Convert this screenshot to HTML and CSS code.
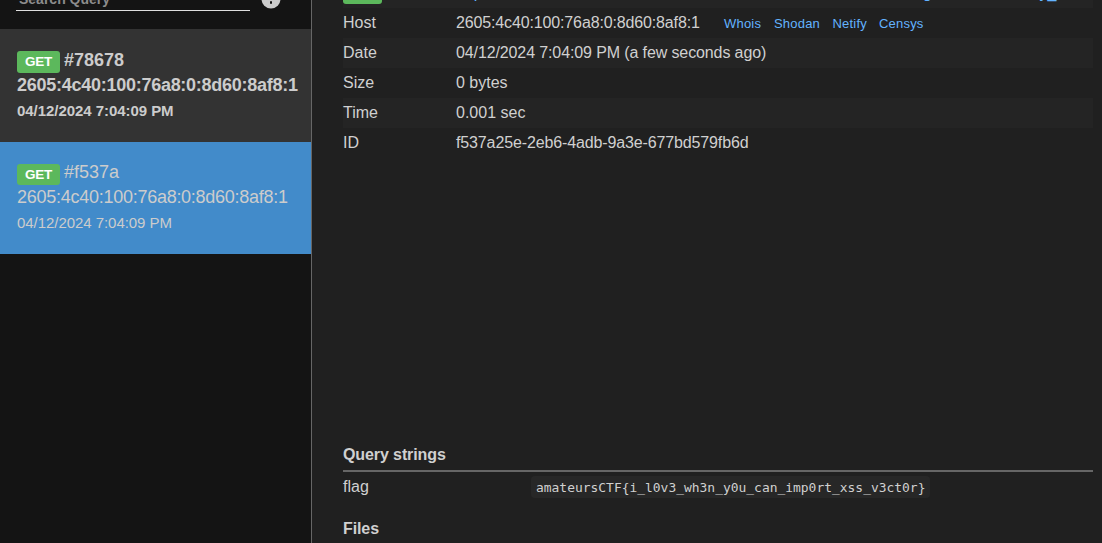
FILE: index.html
```html
<!DOCTYPE html>
<html lang="en">
<head>
<meta charset="utf-8">
<title>Requests</title>
<link rel="stylesheet" href="styles.css">
</head>
<body>
<div class="app">
  <aside class="sidebar">
    <div class="search">
      <div class="search-field"><span>Search Query</span></div>
      <svg class="help" viewBox="0 0 20 20" width="20" height="20"><circle cx="10" cy="10" r="9.5" fill="#ccc"/><path d="M6.8 6.5a3.2 3 0 1 1 4.6 2.7c-1 .5-1.4.9-1.4 1.8" fill="none" stroke="#141414" stroke-width="2"/><path d="M9 12.2h2v2.5H9z" fill="#141414"/></svg>
    </div>
    <div class="request unread">
      <div class="title"><span class="label">GET</span><span class="number">#78678</span></div>
      <div class="ip">2605:4c40:100:76a8:0:8d60:8af8:1</div>
      <div class="when">04/12/2024 7:04:09 PM</div>
    </div>
    <div class="request active">
      <div class="title"><span class="label">GET</span><span class="number">#f537a</span></div>
      <div class="ip">2605:4c40:100:76a8:0:8d60:8af8:1</div>
      <div class="when">04/12/2024 7:04:09 PM</div>
    </div>
  </aside>
  <main class="content">
    <div class="details">
      <div class="row first"><span class="method">GET</span><div class="url"><span>https</span><span class="url-mid">g</span><span class="url-end">y_</span></div></div>
      <div class="row"><span>Host</span><div class="host"><span class="address">2605:4c40:100:76a8:0:8d60:8af8:1</span><a class="whois">Whois</a><a class="shodan">Shodan</a><a class="netify">Netify</a><a class="censys">Censys</a></div></div>
      <div class="row striped"><span>Date</span><span class="date">04/12/2024 7:04:09 PM (a few seconds ago)</span></div>
      <div class="row"><span>Size</span><span>0 bytes</span></div>
      <div class="row striped"><span>Time</span><span>0.001 sec</span></div>
      <div class="row"><span>ID</span><span class="uuid">f537a25e-2eb6-4adb-9a3e-677bd579fb6d</span></div>
    </div>
    <section class="query">
      <h2>Query strings</h2>
      <div class="param"><span>flag</span><code>amateursCTF{i_l0v3_wh3n_y0u_can_imp0rt_xss_v3ct0r}</code></div>
    </section>
    <h2 class="files">Files</h2>
  </main>
</div>
</body>
</html>
```
FILE: styles.css
```css
* { box-sizing: border-box; }
body { margin: 0; background: #202020; color: #d0d0d0; font: 16px/20px "Liberation Sans", Arial, sans-serif; overflow: hidden; }
.app { display: flex; height: 543px; overflow: hidden; white-space: nowrap; }
.sidebar { width: 312px; flex: none; background: #141414; border-right: 1px solid #666; }
.search { height: 29px; padding-left: 16px; display: flex; align-items: flex-start; gap: 11px; }
.search-field { width: 234px; height: 11px; display: flex; align-items: flex-end; border-bottom: 1px solid #e0e0e0; color: #8c8c8c; font-size: 14px; font-weight: bold; line-height: 16px; padding: 0 0 3px 3px; }
.help { margin-top: -11px; }
.request { height: 112px; padding: 18px 0 0 17px; color: #ccc; font-size: 18px; line-height: 25px; }
.unread { height: 113px; background: #333; font-weight: bold; }
.active { background: #428bca; }
.title { display: flex; gap: 4px; height: 26px; }
.unread .number { line-height: 27px; }
.active .title { height: 25px; }
.label { width: 43px; height: 22px; margin-top: 4px; border-radius: 3px; background: #5cb85c; color: #fff; font: bold 13.5px/22px "Liberation Sans", Arial, sans-serif; letter-spacing: -0.2px; text-align: center; }
.active .label { height: 21px; line-height: 21px; }
.ip { letter-spacing: -0.265px; }
.when { font-size: 15px; line-height: 25px; letter-spacing: -0.05px; }
.content { flex: 1; min-width: 0; padding: 0 9px 0 31px; }
.row { display: grid; grid-template-columns: 113px 1fr; height: 30px; line-height: 30px; }
.striped, .first { background: #242424; }
.first { height: 8px; }
.method { width: 39px; height: 24px; margin-top: -20px; border-radius: 3px; background: #5cb85c; color: #fff; font-size: 12px; line-height: 24px; text-align: center; }
.url { display: flex; height: 20px; margin-top: -17px; line-height: 20px; color: #63b3ff; }
.url-mid { margin-left: 432px; }
.url-end { margin-left: 108px; }
.host { display: flex; }
.host a { font-size: 13px; color: #63b3ff; line-height: 31px; letter-spacing: 0.2px; }
.address { width: 268px; letter-spacing: -0.14px; }
.date { letter-spacing: -0.115px; }
.uuid { letter-spacing: -0.13px; }
.whois { width: 50px; }
.shodan { width: 58.5px; }
.netify { width: 46.5px; }
h2 { margin: 0; font-size: 16px; line-height: 22px; letter-spacing: -0.1px; }
.query { margin-top: 286px; }
.query h2 { height: 28px; border-bottom: 2px solid #666; }
.param { display: flex; padding-top: 4px; height: 46px; }
.param span { width: 187px; line-height: 22px; }
code { height: 22px; margin-left: 1px; padding: 0 5px; border-radius: 4px; background: #272727; font: 12.95px/23px "DejaVu Sans Mono", monospace; }
```
